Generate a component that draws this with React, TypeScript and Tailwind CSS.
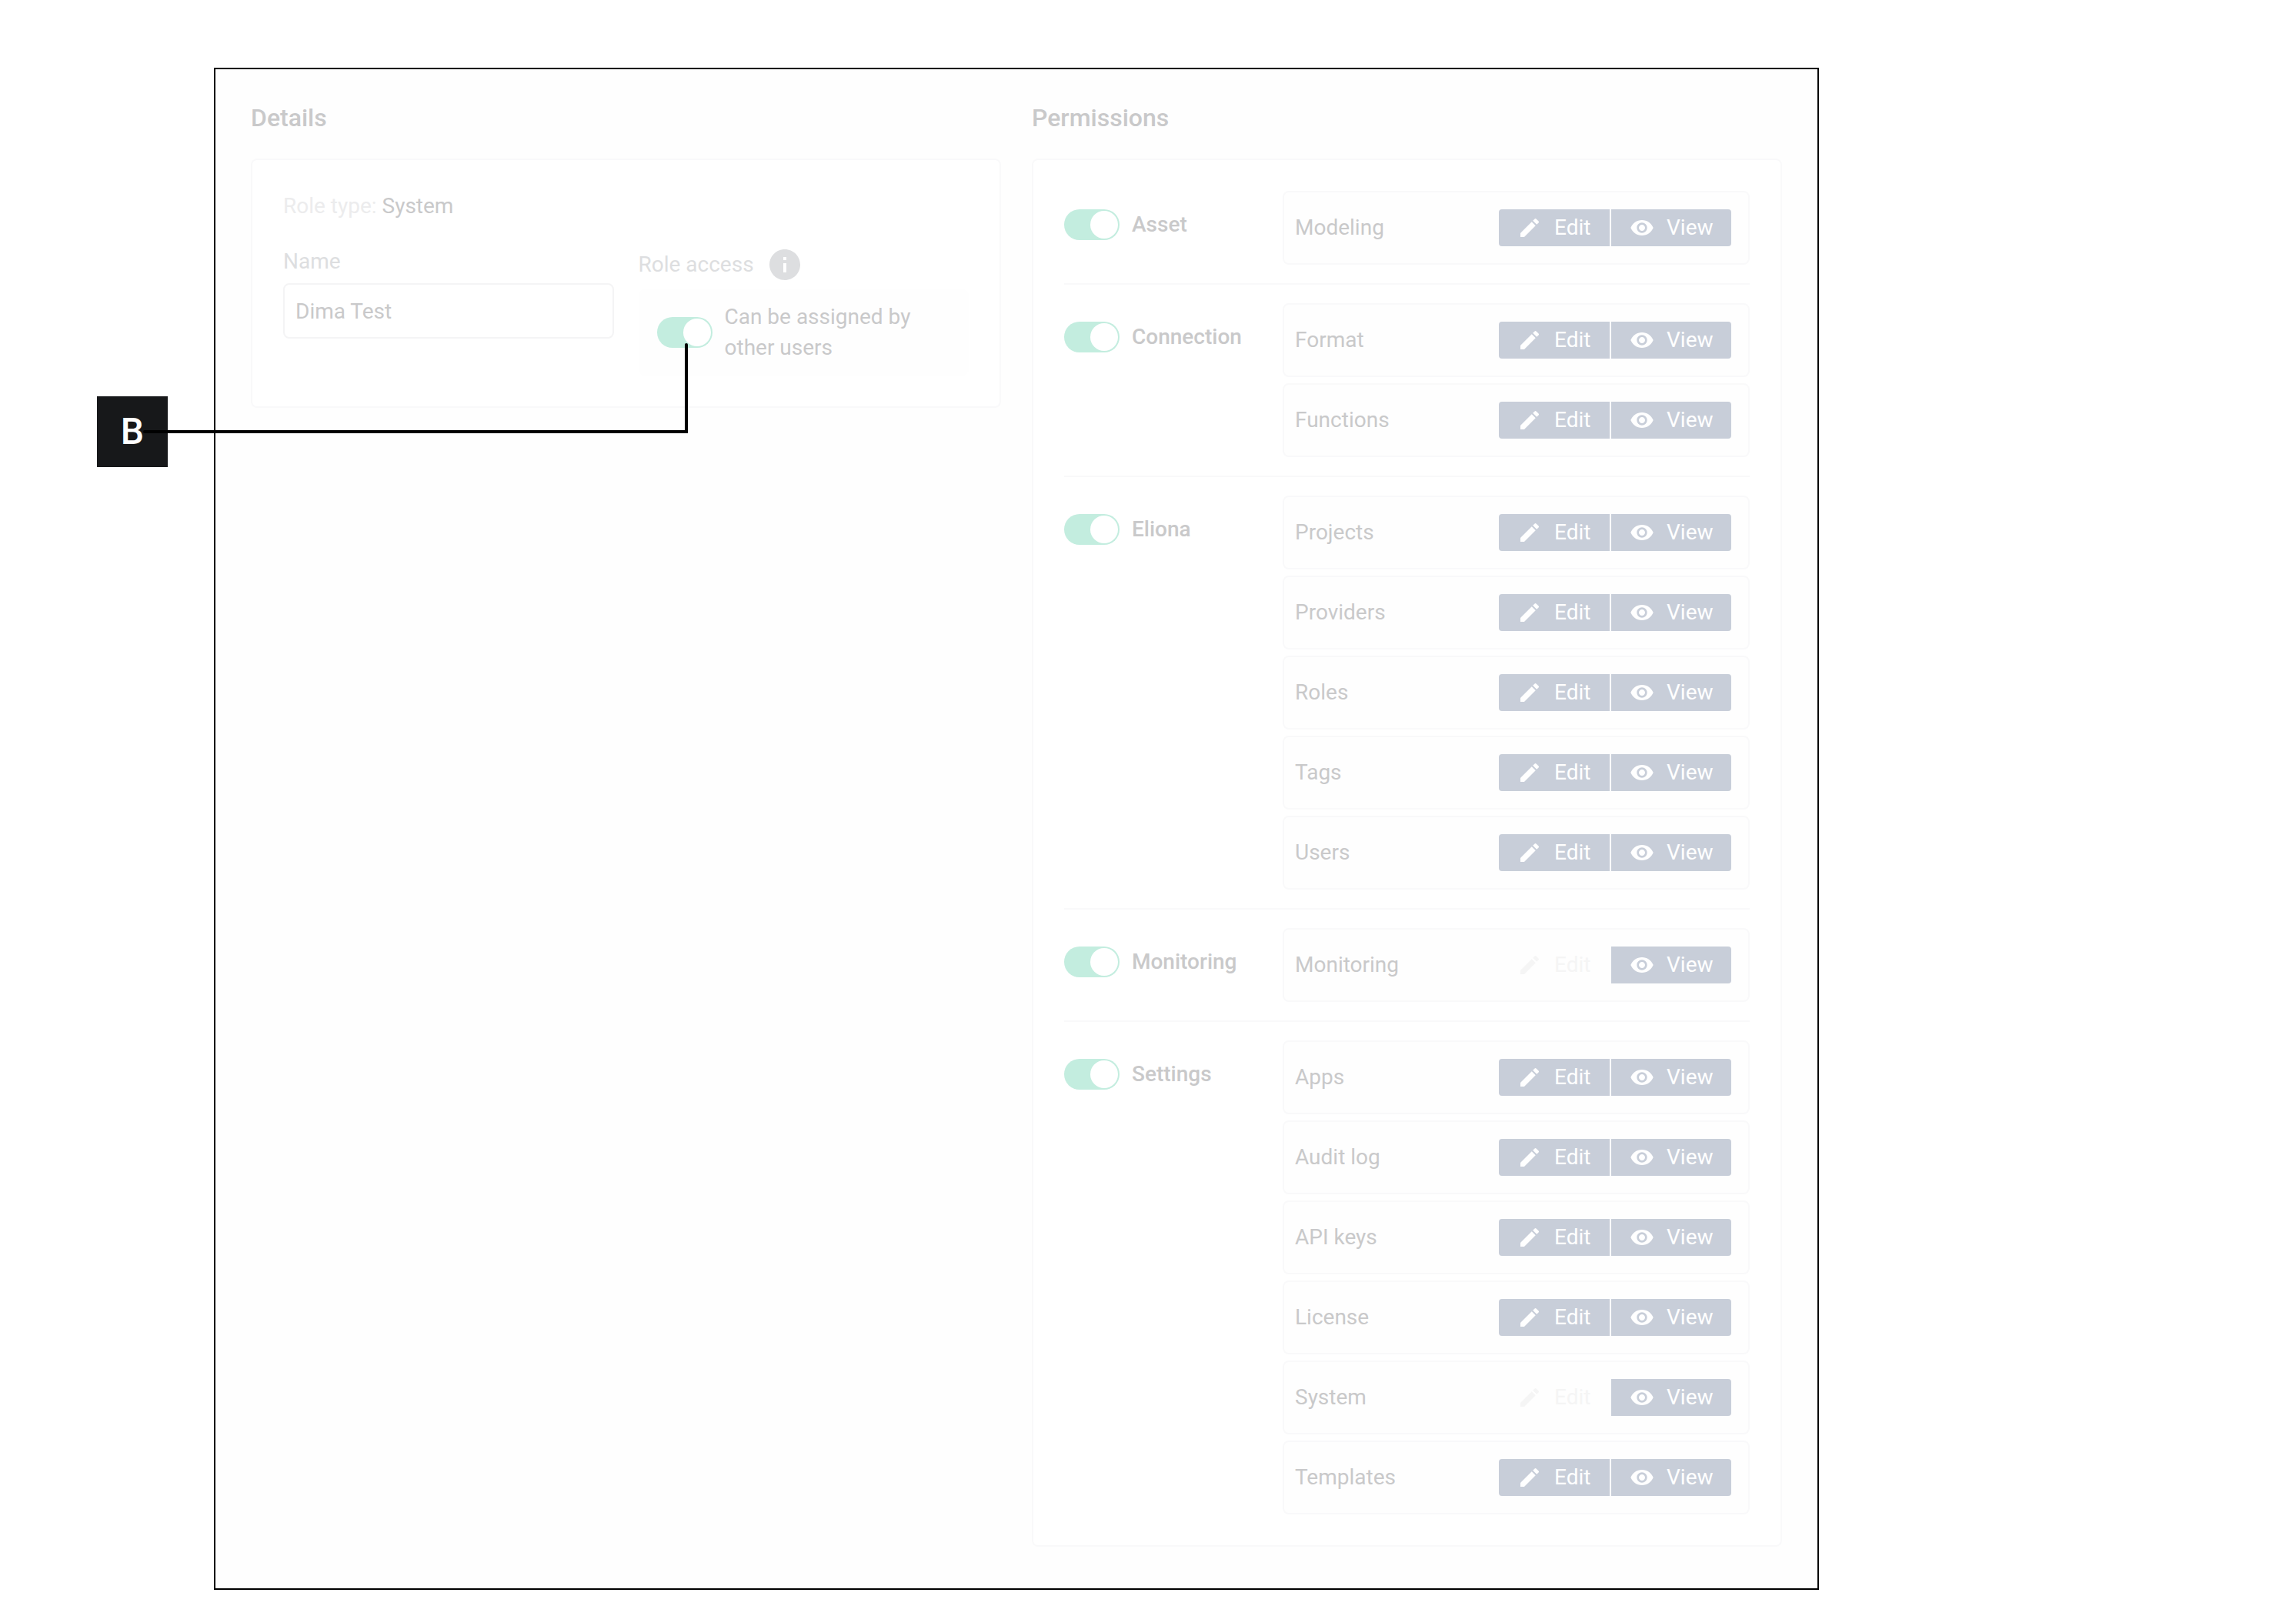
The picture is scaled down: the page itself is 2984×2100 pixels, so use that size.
import { useState } from "react";
import { MdEdit, MdInfo, MdVisibility } from "react-icons/md";

type Permission = { name: string; editable?: boolean };
type Group = { name: string; items: Permission[] };

const GROUPS: Group[] = [
    { name: "Asset", items: [{ name: "Modeling" }] },
    { name: "Connection", items: [{ name: "Format" }, { name: "Functions" }] },
    {
        name: "Eliona",
        items: [{ name: "Projects" }, { name: "Providers" }, { name: "Roles" }, { name: "Tags" }, { name: "Users" }],
    },
    { name: "Monitoring", items: [{ name: "Monitoring", editable: false }] },
    {
        name: "Settings",
        items: [
            { name: "Apps" },
            { name: "Audit log" },
            { name: "API keys" },
            { name: "License" },
            { name: "System", editable: false },
            { name: "Templates" },
        ],
    },
];

function Switch({ id }: { id: string }) {
    const [on, setOn] = useState(true);

    return (
        <input
            id={id}
            type="checkbox"
            role="switch"
            checked={on}
            onChange={(e) => setOn(e.target.checked)}
            className="flex h-10 w-[72px] shrink-0 appearance-none rounded-full bg-gray-200 p-0.5 before:size-9 before:rounded-full before:bg-white checked:justify-end checked:bg-[#c3eddf]"
        />
    );
}

function PermissionRow({ name, editable = true }: Permission) {
    return (
        <li className="flex h-24 items-center justify-between rounded-lg border-2 border-[#f9f9fa] bg-[#fefefe] pr-[22px] pl-3.5">
            <span>{name}</span>
            <div className="flex gap-0.5 rounded bg-white text-white">
                <button
                    type="button"
                    disabled={!editable}
                    className="flex h-12 w-36 items-center gap-4 rounded-l bg-[#c8ced9] pl-6 disabled:bg-[#fefefe] disabled:text-[#f5f5f5]"
                >
                    <MdEdit className="size-8" />
                    Edit
                </button>
                <button type="button" className="flex h-12 w-[156px] items-center gap-4 rounded-r bg-[#c8ced9] pl-6">
                    <MdVisibility className="size-8" />
                    View
                </button>
            </div>
        </li>
    );
}

function PermissionGroup({ name, items }: Group) {
    const id = `group-${name.toLowerCase()}`;

    return (
        <div className="flex border-b-2 border-[#f9f9fa] py-6 first:pt-0 last:border-b-0 last:pb-0">
            <div className="flex w-[284px] shrink-0 items-start gap-4 pt-6">
                <Switch id={id} />
                <label htmlFor={id} className="font-medium">
                    {name}
                </label>
            </div>
            <ul className="flex grow flex-col gap-2">
                {items.map((item) => (
                    <PermissionRow key={item.name} {...item} />
                ))}
            </ul>
        </div>
    );
}

function Details() {
    return (
        <section>
            <h2 className="mb-[33px] text-[32px] leading-10 font-medium">Details</h2>
            <div className="rounded-lg border-2 border-[#f9f9fa] bg-white p-10">
                <p>
                    <span className="text-[#ececed]">Role type:</span> System
                </p>
                <div className="mt-8 grid grid-cols-2 gap-8">
                    <div>
                        <label htmlFor="role-name" className="block text-[#dddee0]">
                            Name
                        </label>
                        <input
                            id="role-name"
                            defaultValue="Dima Test"
                            className="mt-2 h-[72px] w-full rounded-lg border-2 border-[#f4f4f5] bg-white px-3.5"
                        />
                    </div>
                    <div>
                        <div className="flex h-12 items-center gap-4 text-[#dddee0]">
                            Role access
                            <MdInfo className="size-12" />
                        </div>
                        <div className="mt-2 flex items-center gap-4 rounded-lg bg-[#fefefe] px-6 py-4">
                            <Switch id="assignable" />
                            <label htmlFor="assignable">Can be assigned by other users</label>
                        </div>
                    </div>
                </div>
            </div>
        </section>
    );
}

/* Lettered marker with a line leading to the "assigned by other users" switch */
function Callout() {
    return (
        <>
            <div className="absolute top-[515px] left-[126px] flex size-[92px] items-center justify-center bg-[#17181a] text-[48px] font-medium text-white">
                B
            </div>
            <div className="absolute top-[446px] left-[186px] h-[117px] w-[708px]">
                <div className="absolute bottom-0 left-0 h-1 w-full rounded-l-full bg-black" />
                <div className="absolute top-0 right-0 h-full w-1 rounded-t-full bg-black" />
            </div>
        </>
    );
}

export default function App() {
    return (
        <div className="relative bg-white pt-[88px] pr-[620px] pb-[34px] pl-[278px] font-['Roboto',sans-serif] text-[28px] leading-10 text-[#c9c9ca]">
            <main className="grid grid-cols-2 gap-10 border-2 border-black bg-[#fefefe] px-[46px] pt-[43px] pb-[54px]">
                <Details />
                <section>
                    <h2 className="mb-[33px] text-[32px] leading-10 font-medium">Permissions</h2>
                    <div className="rounded-lg border-2 border-[#f9f9fa] bg-white p-10">
                        {GROUPS.map((group) => (
                            <PermissionGroup key={group.name} {...group} />
                        ))}
                    </div>
                </section>
            </main>
            <Callout />
        </div>
    );
}
